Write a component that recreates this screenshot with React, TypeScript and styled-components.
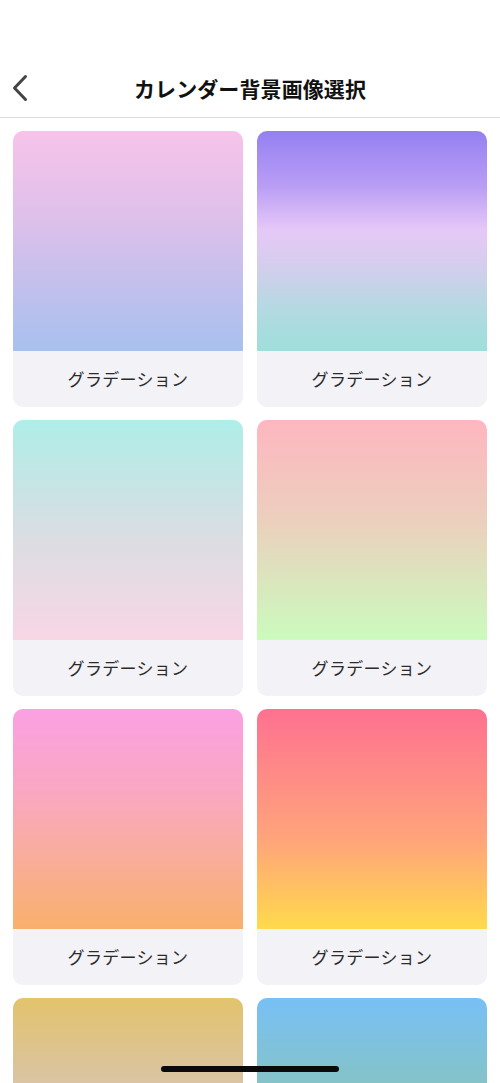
import React from "react";
import styled, { createGlobalStyle } from "styled-components";

const GlobalStyle = createGlobalStyle`
  html, body {
    margin: 0;
    padding: 0;
    background: #ffffff;
    font-family: "Noto Sans CJK JP", "Noto Sans", sans-serif;
    overflow: hidden;
  }
  * { box-sizing: border-box; }
`;

const Screen = styled.div`
  width: 500px;
  height: 1083px;
  position: relative;
  overflow: hidden;
  background: #ffffff;
`;

const Header = styled.header`
  height: 118px;
  padding-top: 60px;
  display: flex;
  align-items: center;
  justify-content: center;
  position: relative;
  border-bottom: 1px solid #dcdce0;
`;

const BackButton = styled.button`
  position: absolute;
  left: 6px;
  top: 71px;
  width: 28px;
  height: 34px;
  border: none;
  background: transparent;
  padding: 0;
  display: flex;
  align-items: center;
  justify-content: center;
`;

const Title = styled.h1`
  margin: 0;
  margin-top: -1px;
  font-size: 21px;
  font-weight: 700;
  color: #111111;
  letter-spacing: 0.1px;
`;

const Grid = styled.main`
  display: grid;
  grid-template-columns: 230px 230px;
  column-gap: 14px;
  row-gap: 13px;
  padding: 13px 13px 0 13px;
`;

const Card = styled.div`
  border-radius: 10px;
  overflow: hidden;
  background: #f2f2f7;
  display: flex;
  flex-direction: column;
`;

const Swatch = styled.div<{ $bg: string }>`
  height: 220px;
  background: ${(p) => p.$bg};
`;

const Label = styled.div`
  height: 56px;
  padding-bottom: 2px;
  display: flex;
  align-items: center;
  justify-content: center;
  font-size: 17px;
  color: #2a2a2a;
  letter-spacing: 0.3px;
`;

const HomeIndicator = styled.div`
  position: absolute;
  left: 161px;
  bottom: 11px;
  width: 178px;
  height: 6px;
  border-radius: 3px;
  background: #0a0a0a;
`;

const gradients = [
  "linear-gradient(180deg, #f7c3ea 0%, #ddc0ea 40%, #a8c0ef 100%)",
  "linear-gradient(180deg, #9580f1 0%, #b99df5 25%, #e6c8f7 45%, #d6cdee 60%, #b5d9e2 80%, #9edfdb 100%)",
  "linear-gradient(180deg, #aeeee8 0%, #c7e4e5 30%, #dcdde3 55%, #f8d6e4 100%)",
  "linear-gradient(180deg, #feb6c0 0%, #eccfbd 45%, #dde3bd 70%, #cbfbbd 100%)",
  "linear-gradient(180deg, #fba0e3 0%, #f9a8bf 40%, #f9ad9e 65%, #f9b06c 100%)",
  "linear-gradient(180deg, #fe7190 0%, #fe8b86 30%, #ffa57a 60%, #ffda4c 100%)",
  "linear-gradient(180deg, #e3c36c 0%, #d9c4a6 40%, #cfc6d6 100%)",
  "linear-gradient(180deg, #78c0f6 0%, #85c3c6 40%, #94cc9e 100%)",
];

export default function App() {
  return (
    <Screen>
      <GlobalStyle />
      <Header>
        <BackButton aria-label="戻る">
          <svg width="18" height="28" viewBox="0 0 18 28" fill="none">
            <path
              d="M14.5 2.5 L3.5 14 L14.5 25.5"
              stroke="#444444"
              strokeWidth="3"
              strokeLinecap="round"
              strokeLinejoin="round"
            />
          </svg>
        </BackButton>
        <Title>カレンダー背景画像選択</Title>
      </Header>
      <Grid>
        {gradients.map((g, i) => (
          <Card key={i}>
            <Swatch $bg={g} />
            <Label>グラデーション</Label>
          </Card>
        ))}
      </Grid>
      <HomeIndicator />
    </Screen>
  );
}
